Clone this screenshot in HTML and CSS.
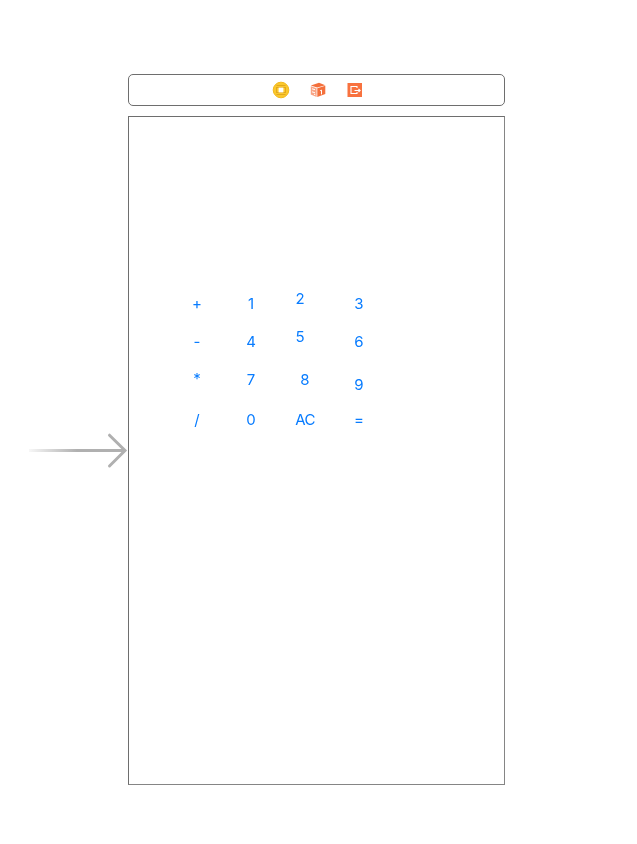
FILE: index.html
```html
<!DOCTYPE html>
<html lang="en">
<head>
<meta charset="utf-8">
<title>Calculator storyboard</title>
<link rel="stylesheet" href="styles.css">
</head>
<body>
<main class="scene">
  <header class="dock">
    <svg class="icon" viewBox="0 0 18 18">
      <circle cx="9" cy="9" r="7.8" fill="#fac82d" stroke="#f3b91e"/>
      <path d="M4.5 4.5h9M4.5 13.5h9" stroke="#e3a81c"/>
      <rect x="4.5" y="6.5" width="9" height="5" fill="#fac82d" stroke="#e3a81c"/>
      <rect x="6.6" y="6.6" width="4.8" height="4.8" fill="#fff"/>
    </svg>
    <svg class="icon" viewBox="0 0 18 18">
      <path d="M1.8 4.6 10 1.8l6.3 2.4-8.1 2.4z" fill="#f4703c"/>
      <path d="M1.8 5.2 7.6 7.2v8.9L1.8 13.5z" fill="#f9a485"/>
      <path d="M8.3 7.2l8-2.4v8.2l-8 3.1z" fill="#f4703c"/>
      <path d="M3 7.8l3 .9M3 10.8l3 1M5 13.2l1.3.5M11.2 9.7l1.3-.6v4.3" fill="none" stroke="#fff" stroke-width="1"/>
    </svg>
    <svg class="icon" viewBox="0 0 18 18">
      <rect x="1.5" y="2" width="14.5" height="14" fill="#f8723f"/>
      <path d="M11 7V5.5H5v7h6V11M8.5 9.5H14M12.5 8l1.6 1.5-1.6 1.5" fill="none" stroke="#fff" stroke-width="1.1"/>
    </svg>
  </header>
  <section class="canvas">
    <svg class="entry" viewBox="0 0 100 36">
      <defs><linearGradient id="fade"><stop offset="0" stop-color="#b0b0b0" stop-opacity=".1"/><stop offset=".5" stop-color="#b0b0b0"/></linearGradient></defs>
      <rect x="1" y="16" width="96" height="3" fill="url(#fade)"/>
      <path d="M81.5 2.2 97 17.5 81.5 33" fill="none" stroke="#b0b0b0" stroke-width="3" stroke-linecap="round"/>
    </svg>
    <div class="keys">
      <span>+</span><span>1</span><span class="raised">2</span><span>3</span>
      <span>-</span><span>4</span><span class="raised">5</span><span>6</span>
      <span class="times">*</span><span>7</span><span>8</span><span class="lowered">9</span>
      <span>/</span><span>0</span><span class="clear">AC</span><span>=</span>
    </div>
  </section>
</main>
</body>
</html>
```
FILE: styles.css
```css
* { box-sizing: border-box; }
body { margin: 0; background: #fff; }
.scene {
  display: flex;
  flex-direction: column;
  gap: 10px;
  width: 377px;
  margin: 74px 0 0 128px;
}
.dock {
  display: flex;
  align-items: center;
  justify-content: center;
  gap: 19px;
  height: 32px;
  padding-left: 2px;
  border: 1px solid #6e6e6e;
  border-radius: 5px;
}
.icon { width: 18px; height: 18px; }
.canvas {
  position: relative;
  height: 669px;
  padding: 167px 0 0 41px;
  border: 1px solid #6e6e6e;
  border-right-color: #858585;
  border-bottom-color: #858585;
}
.entry {
  position: absolute;
  left: -101px;
  top: 316px;
  width: 100px;
  height: 36px;
}
.keys {
  display: grid;
  grid-template-columns: repeat(4, 54px);
  grid-template-rows: 38px 38px 38px 42px;
  color: #087cff;
  font: 400 15px/1 Inter, "Liberation Sans", sans-serif;
  text-align: center;
  will-change: transform;
}
.keys span { align-self: center; }
.keys .raised { transform: translate(-5px, -5px); }
.keys .lowered { transform: translateY(5px); }
.keys .times { transform: translateY(-1px); }
.keys .clear { letter-spacing: -0.6px; }
```
